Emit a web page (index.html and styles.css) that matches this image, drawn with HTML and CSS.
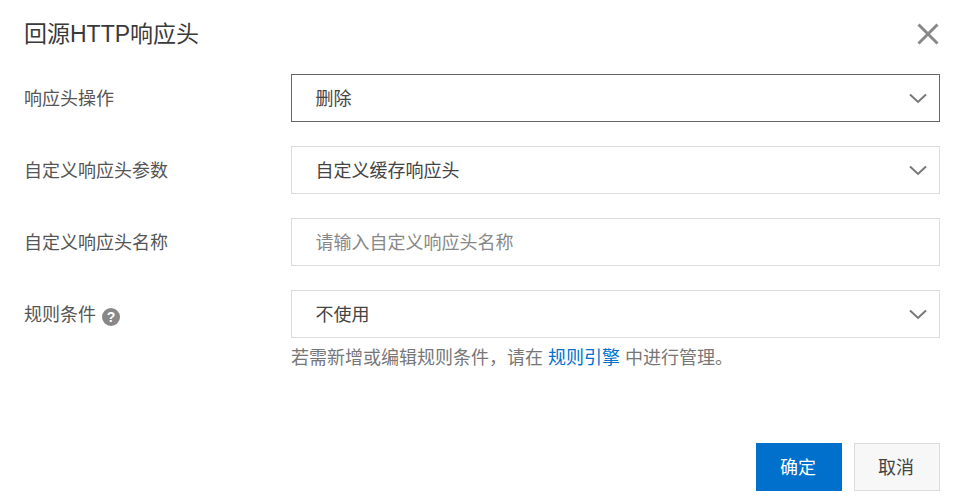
FILE: index.html
```html
<!DOCTYPE html>
<html lang="zh">
<head>
  <meta charset="UTF-8" />
  <title>回源HTTP响应头</title>
  <link rel="stylesheet" href="styles.css">
</head>
<body>
  <div class="dialog">
    <div class="dialog-header">
      <div class="dialog-title">回源HTTP响应头</div>
      <svg class="close-icon" viewBox="0 0 22 22"><path d="M1.5 1.5 L20.5 20.5 M20.5 1.5 L1.5 20.5" /></svg>
    </div>
    <div class="form">
      <div class="form-row">
        <div class="form-label">响应头操作</div>
        <div class="select select-focus">
          <span class="value">删除</span>
          <svg class="arrow" viewBox="0 0 18 11"><path d="M1 1.5 L9 9 L17 1.5" /></svg>
        </div>
      </div>
      <div class="form-row">
        <div class="form-label">自定义响应头参数</div>
        <div class="select">
          <span class="value">自定义缓存响应头</span>
          <svg class="arrow" viewBox="0 0 18 11"><path d="M1 1.5 L9 9 L17 1.5" /></svg>
        </div>
      </div>
      <div class="form-row">
        <div class="form-label">自定义响应头名称</div>
        <div class="select placeholder"><span class="value">请输入自定义响应头名称</span></div>
      </div>
      <div class="form-row">
        <div class="form-label">规则条件<span class="help">?</span></div>
        <div class="select">
          <span class="value">不使用</span>
          <svg class="arrow" viewBox="0 0 18 11"><path d="M1 1.5 L9 9 L17 1.5" /></svg>
        </div>
      </div>
      <div class="form-row hint-row">
        <div class="form-label"></div>
        <div class="hint">若需新增或编辑规则条件，请在 <a class="link">规则引擎</a> 中进行管理。</div>
      </div>
    </div>
    <div class="dialog-footer">
      <button class="btn btn-primary">确定</button>
      <button class="btn">取消</button>
    </div>
  </div>
</body>
</html>
```

FILE: styles.css
```css
body {
  margin: 0;
  padding: 0;
  background-color: #fff;
  color: #333;
  font-family: "Liberation Sans", "Noto Sans CJK SC", sans-serif;
}

.dialog {
  width: 956px;
  height: 502px;
  box-sizing: border-box;
  padding: 0 16px 11px 24px;
  display: flex;
  flex-direction: column;
}

.dialog-header {
  height: 74px;
  flex: none;
  display: flex;
  justify-content: space-between;
  align-items: flex-start;
}

.dialog-title {
  font-size: 23px;
  line-height: 32px;
  margin-top: 18px;
  color: #3a3a3a;
}

.close-icon {
  width: 22px;
  height: 22px;
  margin-top: 23px;
  margin-right: 1px;
}

.close-icon path {
  fill: none;
  stroke: #888;
  stroke-width: 3;
}

.form {
  flex: 1;
  display: flex;
  flex-direction: column;
  gap: 24px;
}

.form-row {
  display: flex;
  align-items: center;
}

.form-label {
  width: 267px;
  flex: none;
  font-size: 18px;
  color: #555;
  margin-top: -2px;
}

.select {
  flex: 1;
  height: 48px;
  box-sizing: border-box;
  border: 1px solid #dcdcdc;
  padding: 0 12px 0 24px;
  display: flex;
  align-items: center;
  justify-content: space-between;
  font-size: 18px;
  color: #444;
}

.value {
  margin-top: -2px;
  margin-left: -0.5px;
}

.select-focus {
  border-color: #666;
}

.placeholder {
  color: #888;
}

.arrow {
  width: 18px;
  height: 11px;
}

.arrow path {
  fill: none;
  stroke: #777;
  stroke-width: 2;
}

.help {
  display: inline-block;
  width: 18px;
  height: 18px;
  margin-left: 6px;
  border-radius: 50%;
  background-color: #888;
  color: #fff;
  font-size: 14px;
  font-weight: bold;
  line-height: 18px;
  text-align: center;
  vertical-align: -1px;
}

.hint-row {
  margin-top: -19px;
}

.hint {
  font-size: 18px;
  color: #777;
}

.link {
  color: #0070cc;
}

.dialog-footer {
  display: flex;
  justify-content: flex-end;
  gap: 12px;
  flex: none;
}

.btn {
  width: 86px;
  height: 48px;
  box-sizing: border-box;
  border: 1px solid #dcdcdc;
  background-color: #f7f7f7;
  color: #444;
  font-size: 18px;
  font-family: inherit;
  padding: 0 2px 2px 0;
}

.btn-primary {
  background-color: #0070cc;
  border-color: #0070cc;
  color: #fff;
}
```
